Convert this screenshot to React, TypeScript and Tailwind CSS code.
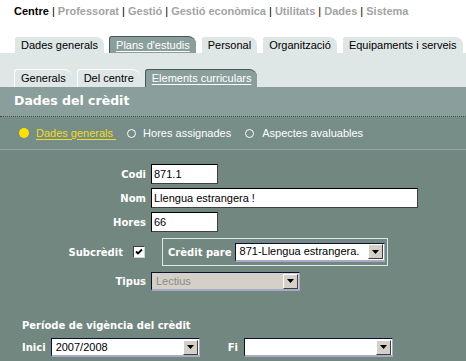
import React from "react";

const navItems = ["Professorat", "Gestió", "Gestió econòmica", "Utilitats", "Dades", "Sistema"];
const mainTabs = ["Dades generals", "Plans d'estudis", "Personal", "Organització", "Equipaments i serveis"];
const subTabs = ["Generals", "Del centre", "Elements curriculars"];

const arial = "font-['Liberation_Sans',Arial,sans-serif]";
const bold = "font-['DejaVu_Sans',Verdana,sans-serif] font-bold";

function Tab({ label, active }: { label: string; active: boolean }) {
  return (
    <div
      className={`h-full shrink-0 whitespace-nowrap flex items-center pl-[6px] pr-[6px] rounded-tl-[3px] rounded-tr-[8px] border-t border-l text-[11px] ${arial} ${
        active
          ? "bg-[#8a9f9b] border-[#4a5654] text-white"
          : "bg-[#dfe6e6] border-white text-black"
      }`}
    >
      <span className={active ? "underline underline-offset-2" : ""}>{label}</span>
    </div>
  );
}

function DropArrow() {
  return (
    <div className="w-[15px] h-[15px] mr-[1px] shrink-0 flex items-center justify-center bg-[#d4d0c8] border border-t-white border-l-white border-b-[#404040] border-r-[#404040]">
      <svg width="7" height="4" viewBox="0 0 7 4">
        <path d="M0 0h7L3.5 4z" fill="#000" />
      </svg>
    </div>
  );
}

function Select({ value, width, disabled }: { value: string; width: number; disabled?: boolean }) {
  return (
    <div
      style={{ width }}
      className={`h-[19px] flex items-center border-t border-l border-b-2 border-r border-t-[#0b1036] border-l-[#0b1036] border-b-[#a7abc6] border-r-[#a7abc6] ${
        disabled ? "bg-[#d4d0c8] text-[#8a8a8a]" : "bg-white text-black"
      }`}
    >
      <span className={`flex-1 pl-[4px] text-[11px] ${arial} whitespace-nowrap`}>{value}</span>
      <DropArrow />
    </div>
  );
}

function TextInput({ value, width }: { value: string; width: number }) {
  return (
    <div
      style={{ width }}
      className={`h-[20px] flex items-center pl-[2px] bg-white border border-t-[#000] border-l-[#000] border-b-[#404040] border-r-[#404040] text-[11px] text-black ${arial}`}
    >
      {value}
    </div>
  );
}

function Row({ label, children }: { label: string; children: React.ReactNode }) {
  return (
    <div className="flex items-center">
      <div className={`w-[146px] text-right text-[10px] text-white ${bold}`}>{label}</div>
      <div className="ml-[5px]">{children}</div>
    </div>
  );
}

export default function App() {
  return (
    <div className="w-[466px] h-[361px] bg-white flex flex-col overflow-hidden">
      {/* top navigation */}
      <div className={`pl-[14px] pt-[4px] h-[36px] whitespace-nowrap text-[11px] leading-[15px] font-['Liberation_Sans',Arial,sans-serif] font-bold`}>
        <span className="text-black">Centre</span>
        {navItems.map(item => (
          <span key={item}>
            <span className="text-black font-normal"> | </span>
            <span className="text-[#a3a3a3]">{item}</span>
          </span>
        ))}
      </div>

      {/* main tabs */}
      <div className="flex gap-[5px] pl-[14px] h-[17px]">
        {mainTabs.map(t => (
          <Tab key={t} label={t} active={t === "Plans d'estudis"} />
        ))}
      </div>

      {/* sub tabs band */}
      <div className="bg-[#dfe6e6] h-[34px] flex items-end">
        <div className="flex gap-[5px] pl-[14px] h-[18px]">
          {subTabs.map(t => (
            <Tab key={t} label={t} active={t === "Elements curriculars"} />
          ))}
        </div>
      </div>

      {/* title */}
      <div className="bg-[#8a9f9b] h-[30px] flex flex-col">
        <div className={`flex-1 flex items-center pl-[14px] text-[12.5px] text-white ${bold}`}>
          Dades del crèdit
        </div>
        <div className="border-b border-dotted border-[#3f4a48]" />
      </div>

      {/* radio options */}
      <div className={`bg-[#768d88] h-[33px] flex items-center pl-[19px] text-[11px] text-white ${arial} border-b border-[#95a8a4]`}>
        <span className="w-[10px] h-[10px] rounded-full bg-[#ffe100]" />
        <span className="ml-[7px] text-[#f3dc19] underline underline-offset-2">Dades generals&nbsp;</span>
        <span className="ml-[11px] w-[9px] h-[9px] rounded-full border border-white" />
        <span className="ml-[7px]">Hores assignades</span>
        <span className="ml-[14px] w-[9px] h-[9px] rounded-full border border-white" />
        <span className="ml-[8px]">Aspectes avaluables</span>
      </div>

      {/* form */}
      <div className="flex-1 bg-[#71877f] pt-[14px] flex flex-col">
        <div className="flex flex-col gap-[4px]">
          <Row label="Codi">
            <TextInput value="871.1" width={67} />
          </Row>
          <Row label="Nom">
            <TextInput value="Llengua estrangera !" width={267} />
          </Row>
          <Row label="Hores">
            <TextInput value="66" width={67} />
          </Row>
        </div>

        <div className="flex items-center mt-[6px]">
          <div className={`w-[123px] text-right text-[10px] text-white ${bold}`}>Subcrèdit</div>
          <div className="ml-[10px] w-[12px] h-[12px] bg-white border border-t-[#404040] border-l-[#404040] border-b-[#d4d0c8] border-r-[#d4d0c8] flex items-center justify-center">
            <svg width="8" height="8" viewBox="0 0 8 8">
              <path d="M1 3.5l2 2L7 1.5" stroke="#000" strokeWidth="1.8" fill="none" />
            </svg>
          </div>
          <div className="ml-[17px] w-[226px] h-[28px] border border-[#dfe8e6] flex items-center pl-[5px]">
            <span className={`text-[10px] text-white ${bold}`}>Crèdit pare</span>
            <div className="ml-[3px]">
              <Select value="871-Llengua estrangera." width={150} />
            </div>
          </div>
        </div>

        <div className="mt-[6px]">
          <Row label="Tipus">
            <Select value="Lectius" width={149} disabled />
          </Row>
        </div>

        <div className={`mt-[27px] pl-[22px] text-[10px] text-white ${bold}`}>Període de vigència del crèdit</div>

        <div className="flex items-center mt-[5px] pl-[22px]">
          <span className={`text-[10px] text-white ${bold}`}>Inici</span>
          <div className="ml-[5px]">
            <Select value="2007/2008" width={149} />
          </div>
          <span className={`ml-[28px] text-[10px] text-white ${bold}`}>Fi</span>
          <div className="ml-[6px]">
            <Select value="" width={149} />
          </div>
        </div>
      </div>
    </div>
  );
}
